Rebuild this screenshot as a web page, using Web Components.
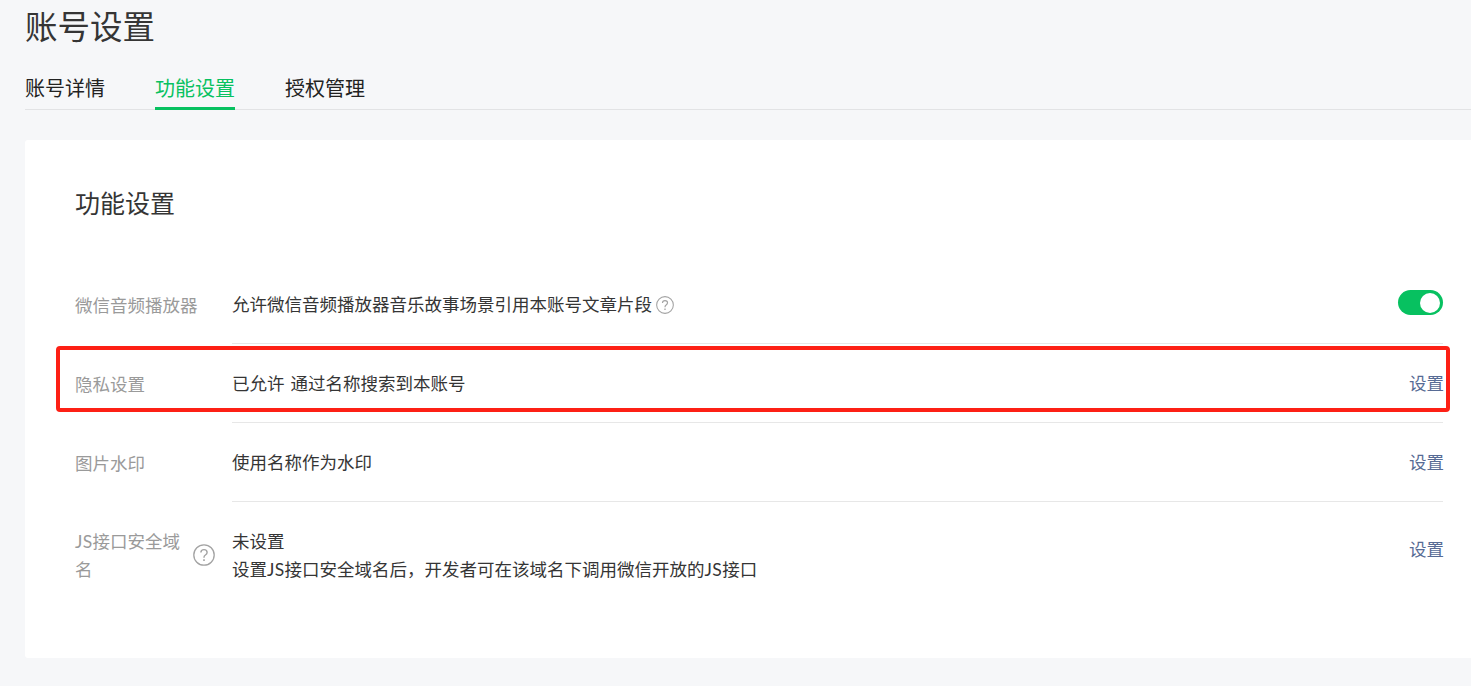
<!DOCTYPE html>
<html lang="zh">
<head>
<meta charset="utf-8">
<title>账号设置</title>
<style>
  html, body { margin: 0; height: 100%; }
  body {
    background: #f6f7f9;
    overflow: hidden;
    font-family: "Noto Sans CJK SC", "Liberation Sans", sans-serif;
    color: #353535;
  }
  .latin { font-family: Lato, "Liberation Sans", sans-serif; letter-spacing: .35px; line-height: 1; }
</style>
</head>
<body>
<account-page>
  <h-title slot="title">账号设置</h-title>
  <tab-bar slot="tabs">
    <tab-item>账号详情</tab-item>
    <tab-item active>功能设置</tab-item>
    <tab-item>授权管理</tab-item>
  </tab-bar>
  <settings-card heading="功能设置">
    <setting-row>
      <span slot="label">微信音频播放器</span>
      <span>允许微信音频播放器音乐故事场景引用本账号文章片段<help-icon size="18"></help-icon></span>
      <toggle-switch slot="action" on></toggle-switch>
    </setting-row>
    <setting-row>
      <span slot="label">隐私设置</span>
      <span style="word-spacing: 2px">已允许 通过名称搜索到本账号</span>
      <link-text slot="action">设置</link-text>
    </setting-row>
    <setting-row>
      <span slot="label">图片水印</span>
      <span>使用名称作为水印</span>
      <link-text slot="action">设置</link-text>
    </setting-row>
    <setting-row last>
      <span slot="label"><span class="latin">JS</span>接口安全域<br>名</span>
      <help-icon slot="label-icon" size="22"></help-icon>
      <div>未设置</div>
      <div>设置<span class="latin">JS</span>接口安全域名后，开发者可在该域名下调用微信开放的<span class="latin">JS</span>接口</div>
      <link-text slot="action" style="margin-bottom: 12px">设置</link-text>
    </setting-row>
  </settings-card>
  <mark-box></mark-box>
</account-page>

<script>
class AccountPage extends HTMLElement {
  constructor() {
    super();
    this.attachShadow({ mode: 'open' }).innerHTML = `
      <style>
        :host { display: block; padding: 5px 0 0 25px; }
        .card { display: block; margin-top: 30px; }
      </style>
      <slot name="title"></slot>
      <slot name="tabs"></slot>
      <div class="card"><slot></slot></div>
    `;
  }
}

class HTitle extends HTMLElement {
  constructor() {
    super();
    this.attachShadow({ mode: 'open' }).innerHTML = `
      <style>
        :host { display: block; font-size: 32.5px; line-height: 40px; color: #353535; }
      </style>
      <slot></slot>
    `;
  }
}

class TabBar extends HTMLElement {
  constructor() {
    super();
    this.attachShadow({ mode: 'open' }).innerHTML = `
      <style>
        :host {
          display: flex;
          gap: 50px;
          margin-top: 20px;
          border-bottom: 1px solid #e2e3e5;
          font-size: 20px;
        }
      </style>
      <slot></slot>
    `;
  }
}

class TabItem extends HTMLElement {
  constructor() {
    super();
    this.attachShadow({ mode: 'open' }).innerHTML = `
      <style>
        :host {
          display: block;
          height: 45px;
          line-height: 46px;
          margin-bottom: -1px;
          color: #222;
        }
        :host([active]) {
          color: #07c160;
          box-shadow: inset 0 -3px 0 #07c160;
        }
      </style>
      <slot></slot>
    `;
  }
}

class SettingsCard extends HTMLElement {
  constructor() {
    super();
    const root = this.attachShadow({ mode: 'open' });
    root.innerHTML = `
      <style>
        :host {
          display: block;
          background: #fff;
          border-radius: 3px 0 0 3px;
          padding: 45px 28px 50px 50px;
        }
        h2 {
          margin: 0 0 45px;
          font-size: 25px;
          font-weight: 400;
          line-height: 35px;
          color: #353535;
        }
      </style>
      <h2></h2>
      <slot></slot>
    `;
    root.querySelector('h2').textContent = this.getAttribute('heading');
  }
}

class SettingRow extends HTMLElement {
  constructor() {
    super();
    this.attachShadow({ mode: 'open' }).innerHTML = `
      <style>
        :host { display: flex; font-size: 17.5px; line-height: 28px; }
        .label {
          flex: none;
          width: 157px;
          box-sizing: border-box;
          padding: 25px 17px 25px 0;
          display: flex;
          align-items: center;
          gap: 4px;
          color: #9a9a9a;
        }
        .label-text { flex: 1; min-width: 0; }
        .body {
          flex: 1;
          display: flex;
          align-items: center;
          justify-content: space-between;
          padding: 25px 0;
          border-bottom: 1px solid #e7e7e7;
          color: #353535;
        }
        :host([last]) .body { border-bottom: 0; }
        .action { display: flex; align-items: center; margin-right: -1px; }
      </style>
      <div class="label">
        <div class="label-text"><slot name="label"></slot></div>
        <slot name="label-icon"></slot>
      </div>
      <div class="body">
        <div><slot></slot></div>
        <div class="action"><slot name="action"></slot></div>
      </div>
    `;
  }
}

class HelpIcon extends HTMLElement {
  constructor() {
    super();
    const size = this.getAttribute('size') || 18;
    this.attachShadow({ mode: 'open' }).innerHTML = `
      <style>
        :host { display: inline-block; width: ${size}px; height: ${size}px; margin-left: 4px; vertical-align: -3px; flex: none; }
        :host([slot]) { margin-left: 0; }
        svg { display: block; width: 100%; height: 100%; }
      </style>
      <svg viewBox="0 0 22 22" fill="none" stroke="#a3a3a3">
        <circle cx="11" cy="11" r="10.2" stroke-width="1.3"/>
        <path d="M7.9 8.6c0-1.9 1.4-3 3.1-3s3.1 1.1 3.1 2.8c0 1.3-.8 2-1.7 2.6-.9.6-1.4 1.1-1.4 2.3v.5" stroke-width="1.4"/>
        <path d="M11 15.3v1.7" stroke-width="1.6"/>
      </svg>
    `;
  }
}

class ToggleSwitch extends HTMLElement {
  constructor() {
    super();
    this.attachShadow({ mode: 'open' }).innerHTML = `
      <style>
        :host {
          display: block;
          position: relative;
          width: 45px;
          height: 25px;
          margin: -3px 1px 0 0;
          border-radius: 13px;
          background: #07c160;
        }
        .knob {
          position: absolute;
          top: 2.5px;
          right: 3px;
          width: 20px;
          height: 20px;
          border-radius: 50%;
          background: #fff;
        }
      </style>
      <div class="knob"></div>
    `;
  }
}

class LinkText extends HTMLElement {
  constructor() {
    super();
    this.attachShadow({ mode: 'open' }).innerHTML = `
      <style>
        :host { display: inline-block; color: #576b95; }
      </style>
      <slot></slot>
    `;
  }
}

// red annotation drawn over the screenshot
class MarkBox extends HTMLElement {
  constructor() {
    super();
    this.attachShadow({ mode: 'open' }).innerHTML = `
      <style>
        :host {
          position: absolute;
          left: 56px;
          top: 346px;
          width: 1394px;
          height: 66px;
          box-sizing: border-box;
          border: 4px solid #fd2015;
          border-radius: 4px;
          pointer-events: none;
        }
      </style>
    `;
  }
}

customElements.define('account-page', AccountPage);
customElements.define('h-title', HTitle);
customElements.define('tab-bar', TabBar);
customElements.define('tab-item', TabItem);
customElements.define('settings-card', SettingsCard);
customElements.define('setting-row', SettingRow);
customElements.define('help-icon', HelpIcon);
customElements.define('toggle-switch', ToggleSwitch);
customElements.define('link-text', LinkText);
customElements.define('mark-box', MarkBox);
</script>
</body>
</html>
